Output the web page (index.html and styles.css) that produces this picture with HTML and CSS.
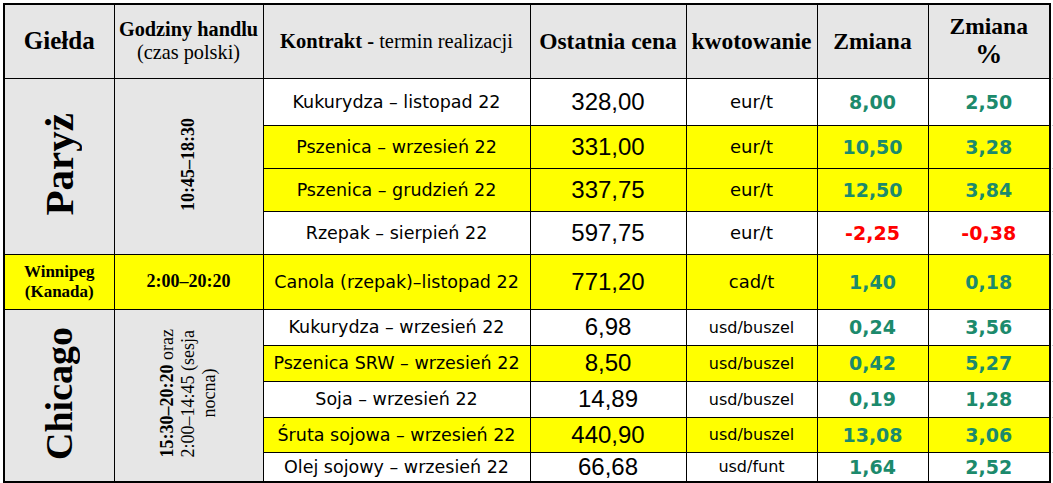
FILE: index.html
```html
<!DOCTYPE html>
<html lang="pl">
<head>
<meta charset="utf-8">
<title>Notowania</title>
<link rel="stylesheet" href="styles.css">
</head>
<body>
<table class="quotes">
  <colgroup>
    <col class="c1"><col class="c2"><col class="c3"><col class="c4"><col class="c5"><col class="c6"><col class="c7">
  </colgroup>
  <thead>
    <tr class="h-head">
      <th class="th-big th-gielda">Giełda</th>
      <th class="th-hours"><b>Godziny handlu</b><br>(czas polski)</th>
      <th class="th-contract"><b>Kontrakt -</b> termin realizacji</th>
      <th class="th-big">Ostatnia cena</th>
      <th class="th-big">kwotowanie</th>
      <th class="th-big">Zmiana</th>
      <th class="th-big tick th-pct"><span class="pct-word">Zmiana</span><span class="pct">%</span></th>
    </tr>
  </thead>
  <tbody>
    <tr class="h-r1">
      <td class="gray" rowspan="4"><span class="vert city-paris">Paryż</span></td>
      <td class="gray" rowspan="4"><span class="vert hours-paris">10:45–18:30</span></td>
      <td class="name">Kukurydza – listopad 22</td>
      <td class="price">328,00</td>
      <td class="unit">eur/t</td>
      <td class="chg up">8,00</td>
      <td class="chg up tick">2,50</td>
    </tr>
    <tr class="h-r2 yellow">
      <td class="name">Pszenica – wrzesień 22</td>
      <td class="price">331,00</td>
      <td class="unit">eur/t</td>
      <td class="chg up">10,50</td>
      <td class="chg up tick">3,28</td>
    </tr>
    <tr class="h-r2 yellow">
      <td class="name">Pszenica – grudzień 22</td>
      <td class="price">337,75</td>
      <td class="unit">eur/t</td>
      <td class="chg up">12,50</td>
      <td class="chg up tick">3,84</td>
    </tr>
    <tr class="h-r2">
      <td class="name">Rzepak – sierpień 22</td>
      <td class="price">597,75</td>
      <td class="unit">eur/t</td>
      <td class="chg down">-2,25</td>
      <td class="chg down tick">-0,38</td>
    </tr>
    <tr class="h-win yellow">
      <td class="win-city">Winnipeg<br>(Kanada)</td>
      <td class="win-hours">2:00–20:20</td>
      <td class="name">Canola (rzepak)–listopad 22</td>
      <td class="price">771,20</td>
      <td class="unit">cad/t</td>
      <td class="chg up">1,40</td>
      <td class="chg up tick">0,18</td>
    </tr>
    <tr class="h-c">
      <td class="gray" rowspan="5"><span class="vert city-chicago">Chicago</span></td>
      <td class="gray" rowspan="5"><span class="vert hours-chicago"><b>15:30–20:20</b> oraz<br>2:00–14:45 (sesja<br>nocna)</span></td>
      <td class="name">Kukurydza – wrzesień 22</td>
      <td class="price us">6,98</td>
      <td class="unit small">usd/buszel</td>
      <td class="chg up">0,24</td>
      <td class="chg up tick">3,56</td>
    </tr>
    <tr class="h-c yellow">
      <td class="name">Pszenica SRW – wrzesień 22</td>
      <td class="price us">8,50</td>
      <td class="unit small">usd/buszel</td>
      <td class="chg up">0,42</td>
      <td class="chg up tick">5,27</td>
    </tr>
    <tr class="h-c">
      <td class="name">Soja – wrzesień 22</td>
      <td class="price us">14,89</td>
      <td class="unit small">usd/buszel</td>
      <td class="chg up">0,19</td>
      <td class="chg up tick">1,28</td>
    </tr>
    <tr class="h-c2 yellow">
      <td class="name">Śruta sojowa – wrzesień 22</td>
      <td class="price us">440,90</td>
      <td class="unit small">usd/buszel</td>
      <td class="chg up">13,08</td>
      <td class="chg up tick">3,06</td>
    </tr>
    <tr class="h-last">
      <td class="name">Olej sojowy – wrzesień 22</td>
      <td class="price us">66,68</td>
      <td class="unit small">usd/funt</td>
      <td class="chg up">1,64</td>
      <td class="chg up">2,52</td>
    </tr>
  </tbody>
</table>
</body>
</html>
```

FILE: styles.css
```css
html, body {
  background: #ffffff;
}
body {
  margin: 3px 0 0 3px;
  font-family: "DejaVu Sans", sans-serif;
  color: #000;
}
.quotes {
  border-collapse: collapse;
  table-layout: fixed;
  width: 1046px;
  border: 2px solid #000;
}
.c1 { width: 110px; }
.c2 { width: 149px; }
.c3 { width: 267px; }
.c4 { width: 156px; }
.c5 { width: 131px; }
.c6 { width: 111px; }
.c7 { width: 122px; }

.quotes th, .quotes td {
  border: 1px solid #000;
  padding: 0 2px;
  text-align: center;
  vertical-align: middle;
  white-space: nowrap;
  position: relative;
}
.quotes th {
  background: #e6e6e6;
  font-family: "Liberation Serif", "Times New Roman", serif;
  font-weight: normal;
}
.th-big {
  font-weight: bold !important;
  font-size: 23.5px;
}
.th-gielda {
  font-size: 25px;
}
.th-hours {
  font-size: 20.3px;
  line-height: 23px;
  white-space: normal;
}
.th-contract {
  font-size: 20.5px;
}
.th-pct {
  padding-top: 2px !important;
}
.pct-word {
  display: block;
  line-height: 24px;
}
.pct {
  display: block;
  font-size: 27px;
  line-height: 32px;
}

.h-head { height: 74px; }
.h-r1 { height: 47px; }
.h-r2 { height: 43px; }
.h-win { height: 55px; }
.h-c { height: 36px; }
.h-c2 { height: 35px; }
.h-last { height: 30px; }

.yellow td { background: #ffff00; }
.quotes td.gray { background: #e6e6e6; }

.vert {
  display: inline-block;
  writing-mode: vertical-rl;
  transform: rotate(180deg);
  font-family: "Liberation Serif", "Times New Roman", serif;
  white-space: nowrap;
}
.city-paris {
  font-size: 41px;
  font-weight: bold;
}
.hours-paris {
  font-size: 18px;
  font-weight: bold;
}
.city-chicago {
  font-size: 38px;
  font-weight: bold;
}
.hours-chicago {
  font-size: 18px;
  line-height: 21px;
  text-align: center;
}

.win-city {
  font-family: "Liberation Serif", "Times New Roman", serif;
  font-weight: bold;
  font-size: 17px;
  line-height: 20px;
}
.win-hours {
  font-family: "Liberation Serif", "Times New Roman", serif;
  font-weight: bold;
  font-size: 18px;
}

.name {
  font-size: 17.5px;
}
.price {
  font-family: "Liberation Sans", Arial, sans-serif;
  font-size: 24px;
}
.unit {
  font-size: 18px;
}
.unit.small {
  font-size: 16px;
}
.chg {
  font-weight: bold;
  font-size: 19px;
}
.up { color: #1c8a6c; }
.down { color: #ff0000; }

.tick::after {
  content: "";
  position: absolute;
  right: -6px;
  bottom: -1px;
  width: 3px;
  height: 1px;
  background: #c8c8c8;
}
```
